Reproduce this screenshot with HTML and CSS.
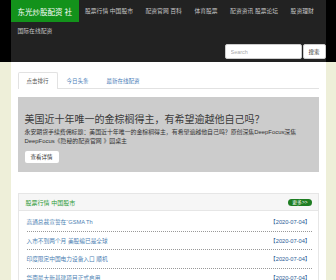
FILE: index.html
```html
<!DOCTYPE html>
<html lang="zh-CN">
<head>
<meta charset="utf-8">
<title>东光炒股配资 社</title>
<link rel="stylesheet" href="styles.css">
</head>
<body>
<header class="topbar">
  <div class="container navbar">
    <nav class="nav">
      <a class="brand" href="#">东光炒股配资 社</a>
      <a class="nav-link" href="#">股票行情 中国股市</a>
      <a class="nav-link" href="#">配资官网 百科</a>
      <a class="nav-link" href="#">体育股票</a>
      <a class="nav-link" href="#">配资资讯 股票论坛</a>
      <a class="nav-link" href="#">股资理财</a>
      <a class="nav-link" href="#">国际在线配资</a>
    </nav>
    <form class="search">
      <input class="search-input" type="text" placeholder="Search">
      <button class="search-btn" type="button">搜索</button>
    </form>
  </div>
</header>
<main class="container page">
  <ul class="tabs">
    <li class="tab active">点击排行</li>
    <li class="tab">今日头条</li>
    <li class="tab">最新在线配资</li>
  </ul>
  <section class="jumbotron">
    <h1 class="jumbo-title">美国近十年唯一的金棕榈得主，有希望逾越他自己吗？</h1>
    <p class="jumbo-text">永安期货手续费佣标题：美国近十年唯一的金棕榈得主，有希望逾越他自己吗？原创深焦DeepFocus深焦DeepFocus《隐秘的配资官网 》园桌主</p>
    <a class="btn" href="#">查看详情</a>
  </section>
  <section class="panel">
    <div class="panel-heading">
      <span class="panel-title">股票行情 中国股市</span>
      <span class="badge">更多&gt;&gt;</span>
    </div>
    <ul class="list">
      <li class="item"><span class="item-title">高通总裁宣誓在“GSMA Th</span><span class="date">【2020-07-04】</span></li>
      <li class="item"><span class="item-title">入市不到两个月 美股编已是全球</span><span class="date">【2020-07-04】</span></li>
      <li class="item"><span class="item-title">印度限定中国电力设备入口 顺机</span><span class="date">【2020-07-04】</span></li>
      <li class="item"><span class="item-title">华南最大新基建项目正式启用</span><span class="date">【2020-07-04】</span></li>
    </ul>
  </section>
</main>
</body>
</html>
```
FILE: styles.css
```css
* { box-sizing: border-box; }
html, body { margin: 0; padding: 0; }
body {
  background: #eeefd9;
  font-family: "Liberation Sans", "Noto Sans CJK SC", sans-serif;
  color: #333;
}
a { text-decoration: none; }
.topbar { background: #000; }
.container { width: 315px; margin: 0 auto; }
.navbar {
  background: #222;
  height: 62px;
  padding-bottom: 3px;
}
.nav {
  display: flex;
  flex-wrap: wrap;
  align-items: center;
}
.brand {
  display: flex;
  align-items: center;
  width: 68px;
  height: 22px;
  padding-left: 7px;
  background: #13921b;
  color: #fff;
  font-size: 7.5px;
}
.nav-link {
  height: 18px;
  line-height: 18px;
  padding: 0 6px 0 6.5px;
  color: #c4c4c4;
  font-size: 5.8px;
}
.nav-link:last-child { padding-left: 7px; }
.search {
  display: flex;
  justify-content: flex-end;
  gap: 1px;
  margin: 4px 0 0;
}
.search-input {
  width: 77px;
  height: 15px;
  border: 1px solid #ccc;
  border-radius: 2px;
  padding: 0 5px;
  font-size: 5.5px;
  font-family: inherit;
  background: #fff;
}
.search-input::placeholder { color: #aaa; }
.search-btn {
  width: 23px;
  height: 15px;
  border: 1px solid #ccc;
  border-radius: 2px;
  background: #fff;
  color: #333;
  font-size: 5.5px;
  font-family: inherit;
  padding: 0;
}
.page {
  background: #fff;
  padding: 10px 7px 10px;
}
.tabs {
  display: flex;
  list-style: none;
  margin: 0;
  padding: 0;
  border-bottom: 1px solid #e2e2e2;
}
.tab {
  height: 16px;
  line-height: 16px;
  padding: 0 8px;
  font-size: 5.5px;
  color: #4a7db8;
  border: 1px solid transparent;
  border-bottom: none;
  margin-bottom: -1px;
}
.tab.active {
  color: #555;
  background: #fff;
  border-color: #e2e2e2;
  border-radius: 2px 2px 0 0;
  height: 17px;
}
.jumbotron {
  margin-top: 8px;
  background: #cccccc;
  padding: 17px 7px 9px;
}
.jumbo-title {
  margin: 0;
  font-size: 10px;
  line-height: 12px;
  font-weight: normal;
  color: #3a3a3a;
}
.jumbo-text {
  margin: 2px 0 5px;
  font-size: 5.9px;
  line-height: 9px;
  color: #333;
}
.btn {
  display: block;
  width: 34px;
  height: 12px;
  line-height: 12px;
  text-align: center;
  background: #fff;
  border-radius: 2px;
  color: #333;
  font-size: 5.5px;
}
.panel {
  margin-top: 21px;
  border: 1px solid #e6e6e6;
}
.panel-heading {
  display: flex;
  justify-content: space-between;
  align-items: center;
  height: 17px;
  padding: 0 6px 0 7px;
  background: #f6f6f6;
  border-bottom: 1px solid #e6e6e6;
}
.panel-title {
  color: #2f9a36;
  font-size: 6px;
}
.badge {
  background: #1e7d22;
  color: #fff;
  font-size: 4.8px;
  line-height: 7px;
  padding: 0 4px;
  border-radius: 4px;
}
.list {
  list-style: none;
  margin: 0 6px 0 8px;
  padding: 2px 0 0;
}
.item {
  display: flex;
  justify-content: space-between;
  align-items: center;
  height: 18.5px;
  border-bottom: 1px dotted #999;
  font-size: 5.7px;
}
.item-title { color: #4d7fb3; }
.date { color: #2b5c96; padding-right: 1px; }
```
